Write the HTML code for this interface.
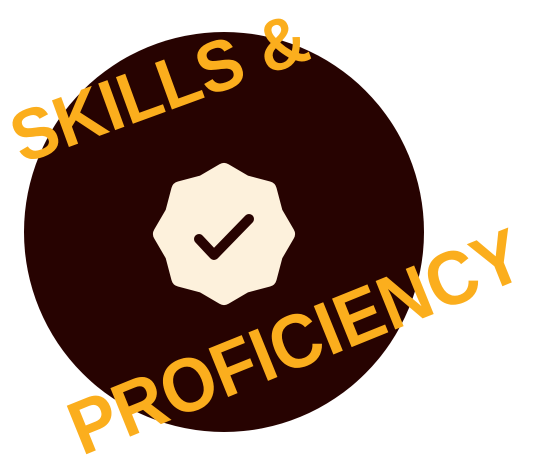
<!DOCTYPE html>
<html><head><style>html,body{margin:0;padding:0;background:#fff;width:537px;height:466px;overflow:hidden}</style></head>
<body>
<svg width="537" height="466" viewBox="0 0 537 466" xmlns="http://www.w3.org/2000/svg">
<circle cx="224" cy="232" r="200" fill="#270301"/>
<polygon points="224,172 244.7,184.1 267.8,190.2 273.9,213.3 286,234 273.9,254.7 267.8,277.8 244.7,283.9 224,296 203.3,283.9 180.2,277.8 174.1,254.7 162,234 174.1,213.3 180.2,190.2 203.3,184.1" fill="#fdf1dc" stroke="#fdf1dc" stroke-width="18" stroke-linejoin="round"/>
<polyline points="199,239 214,255 249,219" fill="none" stroke="#270301" stroke-width="10" stroke-linecap="round" stroke-linejoin="round"/>
<g font-family="'Liberation Sans', sans-serif" font-weight="bold" fill="#fbae1d">
<text x="22" y="164" font-size="72" transform="rotate(-20 22 164)" textLength="310" lengthAdjust="spacingAndGlyphs">SKILLS &amp;</text>
<text x="82" y="456" font-size="76" transform="rotate(-22 82 456)" textLength="482" lengthAdjust="spacingAndGlyphs">PROFICIENCY</text>
</g>
</svg>
</body></html>
